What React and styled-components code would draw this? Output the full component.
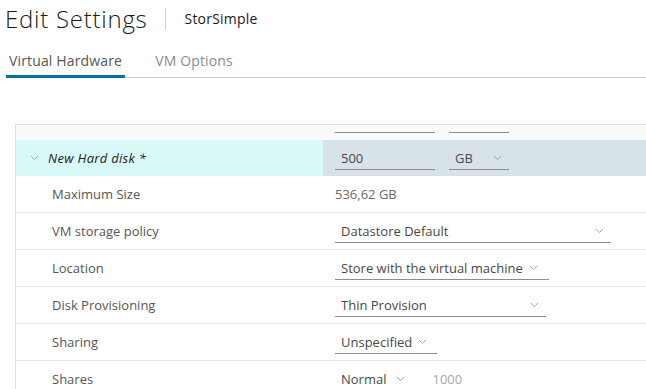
import React from "react";
import styled, { createGlobalStyle } from "styled-components";

const Global = createGlobalStyle`
  html, body { margin: 0; padding: 0; background: #fff; }
  body { font-family: "Open Sans", "Liberation Sans", sans-serif; color: #565656; overflow: hidden; }
  * { box-sizing: border-box; }
`;

const Page = styled.div`
  width: 646px;
  height: 389px;
  overflow: hidden;
`;

const Header = styled.div`
  display: flex;
  align-items: center;
  height: 36px;
  padding-left: 5px;
`;

const Title = styled.h1`
  margin: 0;
  font-size: 24px;
  font-weight: 300;
  color: #1a1a1a;
  letter-spacing: 0.75px;
`;

const Divider = styled.div`
  width: 1px;
  height: 21px;
  background: #ccc;
  margin: 0 19px 0 17px;
`;

const Subtitle = styled.div`
  font-size: 14px;
  font-weight: 500;
  color: #1a1a1a;
  letter-spacing: 0.2px;
`;

const Tabs = styled.div`
  display: flex;
  margin: 10px 0 0 6px;
  border-bottom: 1px solid #ccc;
  height: 32px;
`;

const Tab = styled.div`
  font-size: 14px;
  letter-spacing: 0.15px;
  padding: 5px 3px 0;
  margin-right: ${p => (p.$active ? "27px" : "0")};
  color: ${p => (p.$active ? "#565656" : "#8c8c8c")};
  border-bottom: 3px solid ${p => (p.$active ? "#0072a3" : "transparent")};
  margin-bottom: -1px;
`;

const Grid = styled.div`
  margin: 46px 0 0 15px;
  border-left: 1px solid #ddd;
  border-top: 1px solid #ddd;
  display: grid;
  grid-template-columns: 307px 1fr;
`;

const Cell = styled.div`
  height: ${p => (p.$noBorder ? "36px" : "37px")};
  display: flex;
  align-items: center;
  font-size: 13px;
  background: ${p => p.$bg || "#fff"};
  border-bottom: ${p => (p.$noBorder ? "none" : "1px solid #e8e8e8")};
  padding-left: ${p => p.$pad || 0}px;
  gap: ${p => p.$gap || 0}px;
`;

const TopCell = styled.div`
  height: 15px;
  background: #fafafa;
  display: flex;
  align-items: flex-start;
  padding: 7px 0 0 12px;
  gap: 14px;
`;

const Stub = styled.div`
  width: ${p => p.$w}px;
  height: 1px;
  background: #8c8c8c;
`;

const Label = styled.span`
  font-style: ${p => (p.$italic ? "italic" : "normal")};
  color: ${p => (p.$italic ? "#222" : "#565656")};
  letter-spacing: ${p => (p.$italic ? "0.3px" : "0")};
`;

const Value = styled.span`
  color: #6a6a6a;
`;

const Muted = styled.span`
  color: #a8a8a8;
  margin-left: 20px;
`;

const Field = styled.div`
  width: ${p => (p.$w ? `${p.$w}px` : "auto")};
  flex: none;
  height: 24px;
  border-bottom: ${p => (p.$noLine ? "none" : "1px solid #8c8c8c")};
  display: flex;
  align-items: center;
  justify-content: ${p => (p.$spread ? "space-between" : "flex-start")};
  padding: 0 7px 0 6px;
  color: #484848;
  font-size: 13px;
  gap: ${p => p.$gap || 6}px;
`;

const Chevron = ({ size = 9, color = "#9a9a9a" }) => (
  <svg width={size} height={size / 2 + 1} viewBox="0 0 10 6" fill="none" style={{ flex: "none" }}>
    <path d="M1 1l4 4 4-4" stroke={color} strokeWidth="1" />
  </svg>
);

const RowLead = styled.div`
  display: flex;
  align-items: center;
  gap: 9px;
  padding-left: 14px;
`;

const rows = [
  { label: "VM storage policy", field: "Datastore Default", w: 276, spread: true },
  { label: "Location", field: "Store with the virtual machine", w: 214 },
  { label: "Disk Provisioning", field: "Thin Provision", w: 211, spread: true },
  { label: "Sharing", field: "Unspecified", w: 102 },
];

export default function App() {
  return (
    <Page>
      <Global />
      <Header>
        <Title>Edit Settings</Title>
        <Divider />
        <Subtitle>StorSimple</Subtitle>
      </Header>
      <Tabs>
        <Tab $active>Virtual Hardware</Tab>
        <Tab>VM Options</Tab>
      </Tabs>
      <Grid>
        <TopCell />
        <TopCell>
          <Stub $w={100} />
          <Stub $w={60} />
        </TopCell>

        <Cell $bg="#d9f8f8" $noBorder>
          <RowLead>
            <Chevron size={9} color="#9aa" />
            <Label $italic>New Hard disk *</Label>
          </RowLead>
        </Cell>
        <Cell $bg="#d8e3e9" $noBorder $pad={12} $gap={14}>
          <Field $w={100}>500</Field>
          <Field $w={60} $gap={20}>
            GB
            <Chevron />
          </Field>
        </Cell>

        <Cell $pad={36}>
          <Label>Maximum Size</Label>
        </Cell>
        <Cell $pad={12}>
          <Value>536,62 GB</Value>
        </Cell>

        {rows.map(r => (
          <React.Fragment key={r.label}>
            <Cell $pad={36}>
              <Label>{r.label}</Label>
            </Cell>
            <Cell $pad={12}>
              <Field $w={r.w} $spread={r.spread}>
                {r.field}
                <Chevron />
              </Field>
            </Cell>
          </React.Fragment>
        ))}

        <Cell $pad={36}>
          <Label>Shares</Label>
        </Cell>
        <Cell $pad={12}>
          <Field $noLine $gap={10}>
            Normal
            <Chevron />
          </Field>
          <Muted>1000</Muted>
        </Cell>
      </Grid>
    </Page>
  );
}
